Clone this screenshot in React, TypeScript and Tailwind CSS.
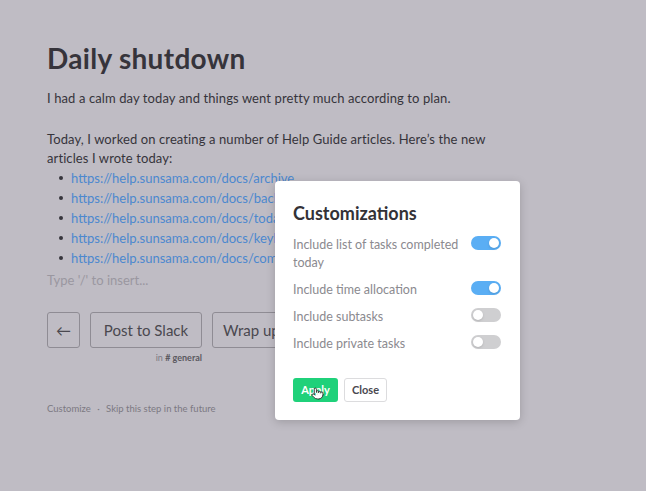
import { Pointer } from "lucide-react";

const links = [
  "https://help.sunsama.com/docs/archive",
  "https://help.sunsama.com/docs/backlog",
  "https://help.sunsama.com/docs/today",
  "https://help.sunsama.com/docs/keyboard-shortcuts",
  "https://help.sunsama.com/docs/commitments",
];

const options = [
  { label: "Include list of tasks completed today", on: true },
  { label: "Include time allocation", on: true },
  { label: "Include subtasks", on: false },
  { label: "Include private tasks", on: false },
];

const Toggle = ({ on }: { on: boolean }) => (
  <div
    className={`flex h-[14px] w-[30px] shrink-0 items-center rounded-full px-[2px] ${
      on ? "justify-end bg-[#5aaef4]" : "justify-start bg-[#cfcfd1]"
    }`}
  >
    <div className="h-[10px] w-[10px] rounded-full bg-white shadow-sm"></div>
  </div>
);

const App = () => {
  return (
    <div className="relative h-[491px] w-full overflow-hidden bg-[#bfbcc4] font-['Lato',sans-serif] text-[#36343b]">
      <main className="pl-[47px] pt-[38px]">
        <h1 className="text-[28px] font-bold leading-[40px] tracking-[0.3px]">Daily shutdown</h1>
        <p className="mt-[10px] text-[13px] leading-[20px] tracking-[0.1px]">
          I had a calm day today and things went pretty much according to plan.
        </p>
        <p className="mt-[22px] w-[445px] text-[13px] leading-[19px] tracking-[0.1px]">
          Today, I worked on creating a number of Help Guide articles. Here’s the new articles I wrote today:
        </p>
        <ul className="text-[13px] leading-[20px]">
          {links.map((l) => (
            <li key={l} className="flex items-center">
              <span className="ml-[12px] mr-[8px] h-[4px] w-[4px] rounded-full bg-[#36343b]"></span>
              <span className="whitespace-nowrap text-[#4c88cf]">{l}</span>
            </li>
          ))}
        </ul>
        <p className="mt-[2px] text-[13px] leading-[20px] text-[#9a97a0]">Type '/' to insert...</p>

        <div className="mt-[22px] flex gap-[10px]">
          <button className="flex h-[36px] w-[33px] items-center justify-center rounded-[3px] border border-[#8f8c94] text-[15px] text-[#4a484f]">
            ←
          </button>
          <div className="flex flex-col items-end">
            <button className="h-[36px] w-[112px] rounded-[3px] border border-[#8f8c94] text-[15px] text-[#4a484f]">
              Post to Slack
            </button>
            <span className="mt-[4px] text-[9px] leading-[12px] text-[#7c7982]">
              in <span className="font-bold text-[#5b5960]"># general</span>
            </span>
          </div>
          <button className="h-[36px] w-[120px] rounded-[3px] border border-[#8f8c94] pl-[10px] text-left text-[15px] text-[#4a484f]">
            Wrap up day
          </button>
        </div>

        <p className="mt-[38px] text-[9.5px] leading-[14px] text-[#7c7982]">
          Customize <span className="mx-[4px]">·</span> Skip this step in the future
        </p>
      </main>

      <div className="absolute left-[275px] top-[181px] h-[239px] w-[245px] rounded-[4px] bg-white pl-[18px] pr-[19px] pt-[20px] shadow-[0_2px_10px_rgba(0,0,0,0.18)]">
        <h2 className="text-[18px] font-bold leading-[24px] text-[#333237]">Customizations</h2>
        <div className="mt-[11px] flex flex-col gap-[9px]">
          {options.map((o) => (
            <div key={o.label} className="flex items-start justify-between">
              <span className="w-[170px] text-[12.5px] leading-[18px] text-[#8b8a8f]">{o.label}</span>
              <Toggle on={o.on} />
            </div>
          ))}
        </div>
        <div className="mt-[25px] flex gap-[6px]">
          <button className="relative h-[24px] w-[45px] rounded-[3px] bg-[#1fd17a] text-[11px] font-bold text-white">
            Apply
            <Pointer className="absolute left-[18px] top-[9px] h-[13px] w-[13px] fill-white text-[#222]" strokeWidth={1.6} />
          </button>
          <button className="h-[24px] w-[43px] rounded-[3px] border border-[#dcdcde] text-[11px] font-bold text-[#4a484f]">
            Close
          </button>
        </div>
      </div>
    </div>
  );
};

export default App;
